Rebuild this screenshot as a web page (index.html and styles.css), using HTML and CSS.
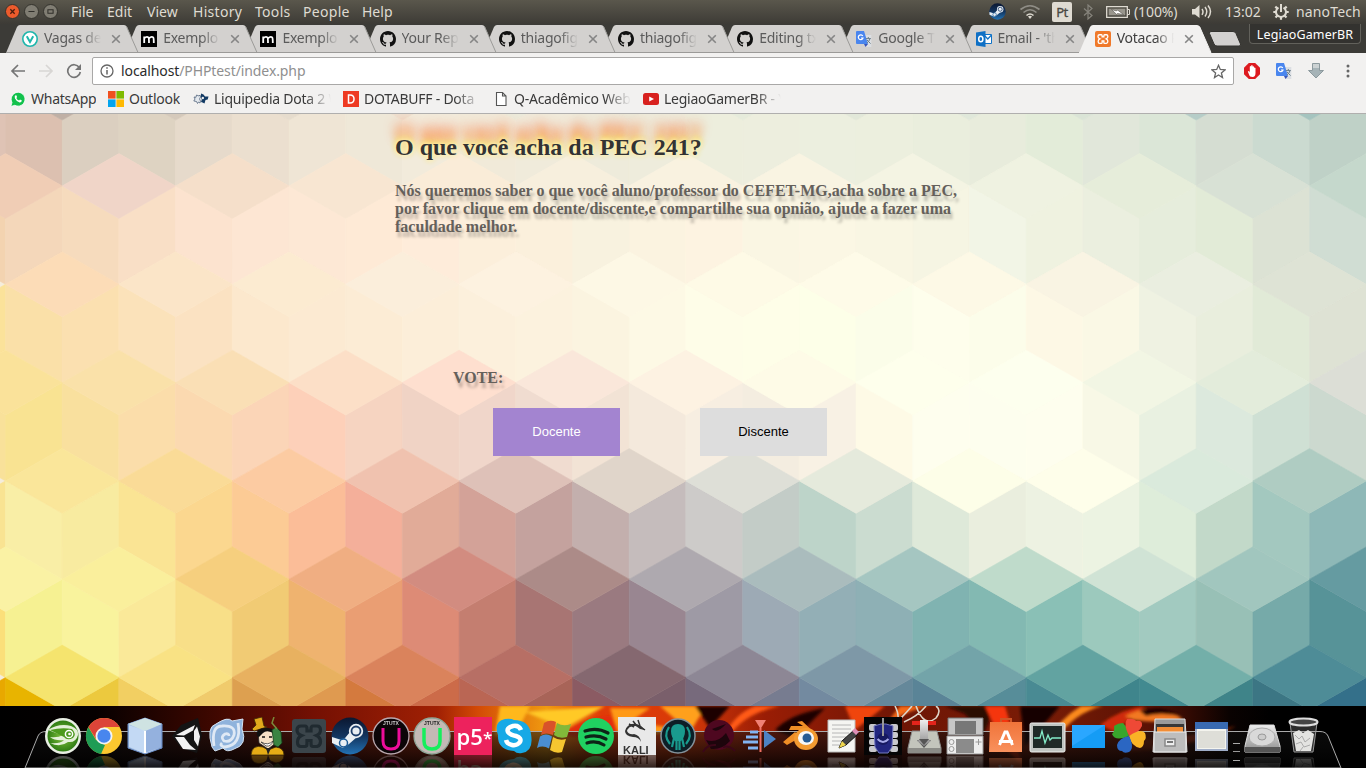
FILE: index.html
```html
<!DOCTYPE html>
<html lang="pt-BR">
<head>
<meta charset="utf-8">
<title>Votacao PEC 241</title>
<link rel="stylesheet" href="styles.css">
</head>
<body>
<svg class="defs" width="0" height="0" aria-hidden="true">
  <defs>
    <symbol id="cross" viewBox="0 0 10 10"><path d="M1.2 1.2 8.8 8.8M8.8 1.2 1.2 8.8" stroke="#858585" stroke-width="1.6" fill="none"/></symbol>
    <symbol id="github" viewBox="0 0 16 16"><path fill="#111" d="M8 0C3.58 0 0 3.58 0 8c0 3.54 2.29 6.53 5.47 7.59.4.07.55-.17.55-.38 0-.19-.01-.82-.01-1.49-2.01.37-2.53-.49-2.69-.94-.09-.23-.48-.94-.82-1.13-.28-.15-.68-.52-.01-.53.63-.01 1.08.58 1.23.82.72 1.21 1.87.87 2.33.66.07-.52.28-.87.51-1.07-1.78-.2-3.64-.89-3.64-3.95 0-.87.31-1.59.82-2.15-.08-.2-.36-1.02.08-2.12 0 0 .67-.21 2.2.82.64-.18 1.32-.27 2-.27s1.36.09 2 .27c1.53-1.04 2.2-.82 2.2-.82.44 1.1.16 1.92.08 2.12.51.56.82 1.27.82 2.15 0 3.07-1.87 3.75-3.65 3.95.29.25.54.73.54 1.48 0 1.07-.01 1.93-.01 2.2 0 .21.15.46.55.38A8.01 8.01 0 0 0 16 8c0-4.42-3.58-8-8-8z"/></symbol>
    <symbol id="medium" viewBox="0 0 16 16"><path fill="#000" d="M0 0h16v16H0z"/><path d="M3.2 12V5.500M3.2 7.400Q5.600 5 7.400 6.400Q8 7 8 12M8 7.400Q10.400 5 12.200 6.400Q12.800 7 12.800 12" fill="none" stroke="#fff" stroke-width="1.800"/></symbol>
    <symbol id="translate" viewBox="0 0 16 16"><path fill="#dcdfe3" d="M7 4h8.3v12H9z"/><path fill="#4a86ee" d="M1 0h7l4 13H1Q0 13 0 12V1Q0 0 1 0z"/><path fill="#3a56b8" d="M8 13h4L9.600 16z"/><path d="M6.800 5A2.400 2.400 0 1 0 7 7H5" stroke="#fff" stroke-width="1.200" fill="none"/><path d="M9.800 7.600h5M12.300 6v1.600M14 7.600Q13.300 10.500 10.800 12M11 9l3.600 3.600" stroke="#6b7f8c" fill="none"/></symbol>
    <symbol id="steam" viewBox="0 0 38 38"><circle cx="19" cy="19" r="18.500" fill="url(#steamg)"/><path d="M1 20 12 23.500 19 15 26 20 18 27 12 31 1 26z" fill="#e9eef3"/><circle cx="25" cy="14" r="7.200" fill="#e9eef3"/><circle cx="25" cy="14" r="4.500" fill="#e9eef3" stroke="#1c3d6b" stroke-width="1.800"/><circle cx="12.500" cy="26" r="4" fill="#e9eef3" stroke="#1b5a96" stroke-width="1.500"/></symbol>
    <symbol id="xampp" viewBox="0 0 38 38"><path d="M11 9h4Q17 9 17 12v2h4v-2q0-3 2-3h4q3.500 0 3.500 4t-4 5.500q4 2 4 6t-3.500 5h-4q-2 0-2-3v-3h-4v3q0 3-2 3h-4q-3.500 0-3.500-4.500t4-6.500Q7 17 7 13t4-4z" fill="none" stroke="currentColor" stroke-width="3.200"/></symbol>
    <linearGradient id="steamg" x2="0" y2="1"><stop offset="0" stop-color="#0b1730"/><stop offset=".5" stop-color="#12345e"/><stop offset="1" stop-color="#2372b4"/></linearGradient>
    <linearGradient id="metal" x2="0" y2="1"><stop offset="0" stop-color="#eee"/><stop offset="1" stop-color="#8c8c8c"/></linearGradient>
    <linearGradient id="cubeg" x2="1"><stop offset="0" stop-color="#8fb0d8"/><stop offset=".5" stop-color="#dceafa"/><stop offset="1" stop-color="#7f9fd0"/></linearGradient>
    <radialGradient id="suse"><stop offset="0" stop-color="#86c440"/><stop offset="1" stop-color="#2f7d13"/></radialGradient>
    <linearGradient id="fold" x2="0" y2="1"><stop offset="0" stop-color="#f0743a"/><stop offset="1" stop-color="#f9915d"/></linearGradient>
  </defs>
</svg>

<header class="menubar">
  <div class="window-buttons">
    <i class="wb close"><svg viewBox="0 0 15 15"><path d="M5 5l5 5M10 5l-5 5" stroke="#4a1d0e" stroke-width="1.500"/></svg></i>
    <i class="wb"><svg viewBox="0 0 15 15"><path d="M4 7.500h7" stroke="#2f2e2a" stroke-width="1.200"/></svg></i>
    <i class="wb"><svg viewBox="0 0 15 15"><path d="M4.500 5.500h6v4h-6z" fill="none" stroke="#2f2e2a" stroke-width="1.200"/></svg></i>
  </div>
  <nav class="menus">
    <span class="m-file">File</span><span class="m-edit">Edit</span><span class="m-view">View</span><span class="m-history">History</span><span class="m-tools">Tools</span><span class="m-people">People</span><span class="m-help">Help</span>
  </nav>
  <div class="tray">
    <svg class="t-steam" width="17" height="17"><use href="#steam"/></svg>
    <svg class="t-wifi" width="22" height="17" viewBox="0 0 22 17"><g fill="none" stroke="#8f8d86" stroke-width="1.600"><path d="M1.500 6.500Q11-1 20.500 6.500M4.500 9.500Q11 4 17.500 9.500" /><path d="M7.500 12.500Q11 9.500 14.500 12.500" stroke="#dfdbd2"/></g><path d="M9 13.500Q11 12 13 13.500L11 16z" fill="#dfdbd2"/></svg>
    <span class="kb">Pt</span>
    <svg class="t-bt" width="10" height="16" viewBox="0 0 10 16"><path d="M1 4.500 9 11.500 5 15V1l4 3.500L1 11.500" fill="none" stroke="#86847c" stroke-width="1.200"/></svg>
    <svg class="t-bat" width="24" height="14" viewBox="0 0 24 14"><path d="M.7 1.700h20.600v10.600H.7z" fill="none" stroke="#dfdbd2" stroke-width="1.300"/><path d="M2.700 3.700h16.600v6.600H2.700z" fill="#99968d"/><path d="M22 4.500h1.500v5H22" fill="none" stroke="#dfdbd2"/><path d="M5.500 4.500l5 1.500 1-1 6 4.500-6-1-1 .8z" fill="#fff" stroke="#55534b" stroke-width=".6"/></svg>
    <span class="pct">(100%)</span>
    <svg class="t-vol" width="20" height="16" viewBox="0 0 20 16"><path d="M0 5h3l4.500-4v13L3 10.500H0z" fill="#dfdbd2"/><path d="M10 5q2 2.800 0 5.800M13 3q3.500 4.500 0 9.500M16 1.500q5 6 0 12.500" fill="none" stroke="#dfdbd2" stroke-width="1.500"/></svg>
    <span class="clock">13:02</span>
    <svg class="t-gear" width="16" height="16" viewBox="0 0 16 16"><path d="M8 0v8" stroke="#dfdbd2" stroke-width="2"/><path d="M5.500 3.600a5 5 0 1 0 5 0" fill="none" stroke="#dfdbd2" stroke-width="2"/><path d="M.3 8H3M13 8h2.700M8 13v2.700M2.300 2.600l2 1.800M13.700 2.600l-2 1.800M2.500 13.500l2-2M13.500 13.500l-2-2" stroke="#dfdbd2" stroke-width="2.200"/></svg>
    <span class="user">nanoTech</span>
  </div>
</header>

<div class="tabstrip">
  <div class="tabs" id="tabs">
    <div class="tab"><svg class="fav" viewBox="0 0 16 16"><circle cx="8" cy="8" r="7.200" fill="#fff" stroke="#1fb6ac" stroke-width="1.600"/><path d="M4.800 5.200 8 11l3.200-5.800" fill="none" stroke="#1fb6ac" stroke-width="2"/></svg><span class="tt">Vagas de</span><svg class="x"><use href="#cross"/></svg></div>
    <div class="tab"><svg class="fav"><use href="#medium"/></svg><span class="tt">Exemplo d</span><svg class="x"><use href="#cross"/></svg></div>
    <div class="tab"><svg class="fav"><use href="#medium"/></svg><span class="tt">Exemplo d</span><svg class="x"><use href="#cross"/></svg></div>
    <div class="tab"><svg class="fav"><use href="#github"/></svg><span class="tt">Your Repo</span><svg class="x"><use href="#cross"/></svg></div>
    <div class="tab"><svg class="fav"><use href="#github"/></svg><span class="tt">thiagofig</span><svg class="x"><use href="#cross"/></svg></div>
    <div class="tab"><svg class="fav"><use href="#github"/></svg><span class="tt">thiagofig</span><svg class="x"><use href="#cross"/></svg></div>
    <div class="tab"><svg class="fav"><use href="#github"/></svg><span class="tt">Editing tx</span><svg class="x"><use href="#cross"/></svg></div>
    <div class="tab"><svg class="fav"><use href="#translate"/></svg><span class="tt">Google Tr</span><svg class="x"><use href="#cross"/></svg></div>
    <div class="tab"><svg class="fav" viewBox="0 0 16 16"><path fill="#fff" stroke="#1173c7" d="M8 3.500h7.500v9H8z"/><path d="M8 4l3.800 4 3.700-4" fill="none" stroke="#1173c7" stroke-width="1.300"/><path fill="#0f70c5" d="M0 1.500 9.500 0v16L0 14.500z"/><ellipse cx="4.800" cy="8" rx="2.100" ry="2.800" fill="none" stroke="#fff" stroke-width="1.500"/></svg><span class="tt">Email - 'th</span><svg class="x"><use href="#cross"/></svg></div>
    <div class="tab active"><svg class="fav" viewBox="0 0 16 16"><rect width="16" height="16" rx="2" fill="#f0792a"/><svg width="16" height="16" color="#fff"><use href="#xampp"/></svg></svg><span class="tt">Votacao P</span><svg class="x"><use href="#cross"/></svg></div>
  </div>
  <svg class="newtab" width="34" height="18" viewBox="0 0 34 18"><path d="M3 1.500h22Q27 1.500 28 3.500L32.500 14Q33 16 31 16H9Q7 16 6 14L1.500 3.500Q1 1.500 3 1.500z" fill="#d3d1cf" stroke="#33322e"/></svg>
  <span class="profile">LegiaoGamerBR</span>
</div>

<div class="toolbar">
  <svg class="nav-ic" viewBox="0 0 16 16"><path d="M15 8H2.500M8 2 2 8l6 6" fill="none" stroke="#757575" stroke-width="1.700"/></svg>
  <svg class="nav-ic" viewBox="0 0 16 16"><path d="M1 8h12.500M8 2l6 6-6 6" fill="none" stroke="#d8d6d4" stroke-width="1.700"/></svg>
  <svg class="nav-ic" viewBox="0 0 16 16"><path d="M13.300 4.500A6.300 6.300 0 1 0 14.300 9" fill="none" stroke="#757575" stroke-width="1.700"/><path d="M15 1v6H9z" fill="#757575"/></svg>
  <div class="omnibox">
    <svg width="14" height="14" viewBox="0 0 14 14"><circle cx="7" cy="7" r="6" fill="none" stroke="#666" stroke-width="1.300"/><path d="M7 6v4.500M7 3.300v1.500" stroke="#666" stroke-width="1.500"/></svg>
    <span class="url"><b>localhost</b>/PHPtest/index.php</span>
    <svg class="star" width="15" height="15" viewBox="0 0 15 15"><path d="M7.500 1.300 9.300 5.500l4.700.4-3.600 3 1.100 4.600-4-2.500-4 2.500 1.100-4.600L1 5.900l4.700-.4z" fill="none" stroke="#666" stroke-width="1.300"/></svg>
  </div>
  <div class="exts">
    <svg width="16" height="16" viewBox="0 0 16 16"><path d="M4.800 0h6.400L16 4.800v6.400L11.200 16H4.800L0 11.200V4.800z" fill="#dd1a1f"/><path d="M3.800 8.500 5 8l.8 1.500V3.500q.8-1 1.400 0V2.600q.8-1 1.400 0v.9q.9-.8 1.400.2v1.100q.9-.8 1.500.2v5Q11.500 14 8.500 14T5 11.500z" fill="#fff"/></svg>
    <svg width="16" height="16"><use href="#translate"/></svg>
    <svg width="18" height="18" viewBox="0 0 18 18"><path d="M5.500 1.500h7v7h4L9 16 1.500 8.500h4z" fill="#a6b3b7" stroke="#8d9a9e"/><path d="M6 2h6v4H6z" fill="#ccd2d3"/></svg>
    <svg width="4" height="16" viewBox="0 0 4 16"><g fill="#666"><circle cx="2" cy="3" r="1.500"/><circle cx="2" cy="8" r="1.500"/><circle cx="2" cy="13" r="1.500"/></g></svg>
  </div>
</div>

<div class="bookmarks">
  <a class="bm b1"><svg viewBox="0 0 16 16"><path d="M.8 15.500 2 11.500A6.900 6.900 0 1 1 4.800 14.300z" fill="#12c14c" stroke="#fff" stroke-width=".8"/><path d="M5.500 4.300q-1.400 1-.5 3.100 1.500 3.200 4.700 4 2 .2 2.200-1.800l-1.900-1-.9 1Q7.300 9 6.300 7l.8-.9-.8-1.900z" fill="#fff"/></svg><span>WhatsApp</span></a>
  <a class="bm b2"><svg viewBox="0 0 16 16"><path fill="#f0501f" d="M0 0h7.600v7.600H0z"/><path fill="#7fba00" d="M8.400 0H16v7.600H8.400z"/><path fill="#03a4ee" d="M0 8.400h7.600V16H0z"/><path fill="#feb902" d="M8.400 8.400H16V16H8.400z"/></svg><span>Outlook</span></a>
  <a class="bm b3"><svg viewBox="0 0 16 16"><path d="M3.500 4l2.500 1 1-1 .5 2-1 2 1 2-.5 2-1.500-1-1 1.500-1-2L.8 10l1.200-2-1-2 2 .3z" fill="#e3e8ed" stroke="#54667d" stroke-width=".8"/><path d="M8 2.500l2.500 1 1.500 2 3.500 0-.8 3-2.200.5-1 3.500-2-1-1.500-.5.8-2.500-1-2z" fill="#123a63"/><circle cx="9.800" cy="7" r="1.200" fill="#f2f1f0"/></svg><span>Liquipedia Dota 2 W</span></a>
  <a class="bm b4"><svg viewBox="0 0 16 16"><path fill="#ee3a22" d="M0 0h16v16H0z"/><path d="M5.500 4v8h1.500q4 0 4-4t-4-4z" fill="none" stroke="#fff" stroke-width="1.500"/></svg><span>DOTABUFF - Dota</span></a>
  <a class="bm b5"><svg viewBox="0 0 16 16"><path d="M3.500 1.500h6L13 5v9.500H3.500zM9.500 1.500V5H13" fill="#fff" stroke="#555" stroke-width="1.100"/></svg><span>Q-Acadêmico Web</span></a>
  <a class="bm b6"><svg viewBox="0 0 16 16"><rect y="2" width="16" height="12" rx="2.500" fill="#d8211e"/><path d="M6.200 5.500 11 8l-4.800 2.500z" fill="#fff"/></svg><span>LegiaoGamerBR - Y</span></a>
</div>

<main class="page">
  <svg class="mosaic" id="mosaic" viewBox="0 114 1366 592" width="1366" height="592"></svg>
  <section class="content">
    <h2>O que você acha da PEC 241?</h2>
    <p class="lead">Nós queremos saber o que você aluno/professor do CEFET-MG,acha sobre a PEC, por favor clique em docente/discente,e compartilhe sua opnião, ajude a fazer uma faculdade melhor.</p>
    <div class="vote">
      <p class="label">VOTE:</p>
      <div class="choices"><button class="primary">Docente</button><button>Discente</button></div>
    </div>
  </section>
</main>

<footer class="dock">
  <svg class="flames" width="1366" height="62" viewBox="0 706 1366 62">
    <defs>
      <linearGradient id="fire"><stop offset="0" stop-color="#000"/><stop offset=".07" stop-color="#060000"/><stop offset=".15" stop-color="#3a0700"/><stop offset=".23" stop-color="#741003"/><stop offset=".32" stop-color="#a02004"/><stop offset=".35" stop-color="#d34a06"/><stop offset=".4" stop-color="#f09a10"/><stop offset=".44" stop-color="#e03c08"/><stop offset=".5" stop-color="#d83a08"/><stop offset=".56" stop-color="#9a1d05"/><stop offset=".66" stop-color="#6e1605"/><stop offset=".76" stop-color="#7a1c06"/><stop offset=".84" stop-color="#5a1204"/><stop offset=".9" stop-color="#0a0201"/><stop offset=".93" stop-color="#000"/></linearGradient>
      <linearGradient id="shelf" x2="0" y2="1"><stop offset="0" stop-color="#111" stop-opacity=".55"/><stop offset="1" stop-color="#000" stop-opacity=".9"/></linearGradient>
      <filter id="soft"><feGaussianBlur stdDeviation="1.500"/></filter>
    </defs>
    <path fill="url(#fire)" d="M0 706h1366v62H0z"/>
    <g filter="url(#soft)">
      <path d="M500 706h30l-15 30h-20z" fill="#ffb81c"/><path d="M525 712l80-6-40 22z" fill="#ffc928"/><path d="M560 735q30-25 70-18l-20 24z" fill="#e22f0a"/><path d="M610 708l40 0-20 14 60 8-70 8z" fill="#ff9a12"/><path d="M660 706l30 26 16-26z" fill="#ffa01c"/>
      <path d="M695 706h35l-20 22z" fill="#1c0401"/><path d="M730 735q15-22 50-29h-25q-20 8-30 28z" fill="#ff5a12"/><path d="M775 730q15-16 50-22l-30 30z" fill="#1a0401"/><path d="M845 706h40l-30 24z" fill="#f04510"/><path d="M870 745q20-32 60-39h-30z" fill="#f66a18"/><path d="M945 706l50 0-12 30-18-22z" fill="#2a0702"/><path d="M985 706h20l18 60-20-20z" fill="#f5360a"/><path d="M1020 706h40l-35 40z" fill="#120301"/><path d="M1055 740q20-28 48-34h-22q-20 12-34 34z" fill="#fb8a1e"/><path d="M1100 725q20-16 45-19l-30 26z" fill="#d02c08"/><path d="M1125 716q30-16 58 3-18 5-50 1z" fill="#f27820"/><path d="M1140 711q22-8 40 5-20-4-34 0z" fill="#240502"/><path d="M1130 740q50 0 106-14-36 20-106 26z" fill="#8a2208"/>
    </g>
    <path d="M895 706q5 10 2 16M912 706q-12 14-20 20M916 706q8 22 20 12 6-8 0-12M926 706q-8 10-22 16" fill="none" stroke="#ded5c8" stroke-width="1.600"/>
    <path d="M25 768 38 736Q40 731.500 46 731.500H1320Q1326 731.500 1328 736L1341 768z" fill="url(#shelf)" stroke="#aaa" stroke-width="1"/>
  </svg>
  <div class="icons">
    <svg viewBox="0 0 38 38"><circle cx="19" cy="19" r="18" fill="#e9efe4"/><circle cx="19" cy="19" r="15.500" fill="url(#suse)"/><path d="M4 13Q15 6 27 9q8 3 7 9-2 8-10 7-8 6-18 1 10 1 14-3-9 1-14-3 8 1 13-2-8-2-15-5z" fill="#e4f0d8"/><path d="M6 13q12-3 22-1 5 5 1 9-6 3-9-1" fill="#4c991e"/><circle cx="25" cy="17" r="3.600" fill="#4c991e" stroke="#fff" stroke-width="1.500"/><circle cx="25.500" cy="17" r="1.300" fill="#fff"/></svg>
    <svg viewBox="0 0 38 38"><circle cx="19" cy="19" r="18" fill="#fbc72f"/><path d="M3.400 10 11 23l9 5-4 9A18 18 0 0 1 3.400 10z" fill="#1f9c55"/><path d="M3.400 10A18 18 0 0 1 34.600 10H19l-8 12z" fill="#dc4438"/><circle cx="19" cy="19" r="8.500" fill="#f4f4f4"/><circle cx="19" cy="19" r="6.700" fill="#4886ee"/></svg>
    <svg viewBox="0 0 38 38"><path d="M19 1 36 7v24L19 37 2 31V7z" fill="url(#cubeg)" stroke="#6d8fc9"/><path d="M19 1 36 7 19 14 2 7z" fill="#cfe3e2"/><path d="M3 8l16 6v22L3 30z" fill="#c3d9f4"/><path d="M35 8 19 14v22l16-6z" fill="#94b1de"/><path d="M19 14v22" stroke="#fff" stroke-width="2"/></svg>
    <svg viewBox="0 0 38 38"><path d="M31 1 35 18 30 36 14 31 5 19l9-11z" fill="#141414"/><path d="M28 8 9 18l8 .5 9-5zM30 9.500 27 14v9l4 6.500 2-10zM8 20l8 12 13 1-6-5-6-8z" fill="#f2f2f2"/></svg>
    <svg viewBox="0 0 38 38"><path d="M4 30Q-2 10 8 7 20-1 24 4l11-2-1 10q6 16-8 20-7 4-11-1l-8 3z" fill="#8fb3dc" stroke="#d5e4f4"/><path d="M6 29Q3 9 14 9q14-1 12 9-3 8-10 6-4-4 1-7 4-1 4 2M30 6q4 22-13 24-6-1-3-4" fill="none" stroke="#dfe9f5" stroke-width="2.800"/></svg>
    <svg viewBox="0 0 38 38"><path d="M7 8 5 2l8-2 2 9 3 1-13 4-2-2z" fill="#e2a81c" stroke="#3c2b05" stroke-width=".8"/><path d="M9 15q9-6 17 1l1 10-8 6-9-6z" fill="#f7e2c8" stroke="#222" stroke-width=".8"/><path d="M8 19q-2-8 9-8 9-1 9 6-8-5-12-1l-4 4z" fill="#111"/><path d="M13 20h3M20 20h3" stroke="#111" stroke-width="1.500"/><path d="M12 25q7 4 12-1-2 6-7 5z" fill="#fff" stroke="#222" stroke-width=".7"/><path d="M2 38q1-11 12-8l5 3 8-3q8 1 8 8z" fill="#e5ac16" stroke="#3c2b05" stroke-width=".8"/><path d="M17 31l2 7 3-7z" fill="#222"/><path d="M23 13l4-3 5 5 1 11-4 4-4-2z" fill="#3a8442" stroke="#153c1a" stroke-width=".8"/><path d="M25 0l-2 6 5 6" stroke="#7a8a3b" stroke-width="1.500" fill="none"/></svg>
    <svg viewBox="0 0 38 38" color="#202a30"><rect x="2" y="2" width="34" height="34" rx="3" fill="#3b454b"/><use href="#xampp"/></svg>
    <svg><use href="#steam"/></svg>
    <svg viewBox="0 0 38 38"><circle cx="19" cy="19" r="18" fill="#0c0508" stroke="#b9a7ae" stroke-width="1.300"/><path d="M11 11v13q0 8 8 8t8-8V11" fill="none" stroke="#ee0d9a" stroke-width="3"/><text x="19" y="8" class="tiny" fill="#ccc">JTUTX</text></svg>
    <svg viewBox="0 0 38 38"><circle cx="19" cy="19" r="18" fill="#c4b9b5" stroke="#8fa597" stroke-width="1.300"/><path d="M11 11v13q0 8 8 8t8-8V11" fill="none" stroke="#16ee5c" stroke-width="3.500"/><text x="19" y="8" class="tiny" fill="#222">JTUTX</text></svg>
    <svg viewBox="0 0 38 38"><path fill="#ed225d" d="M0 0h38v38H0z"/><text x="2.500" y="28" class="p5">p5</text><text x="29" y="27" class="p5s">*</text></svg>
    <svg viewBox="0 0 38 38"><path d="M10 2q6-1 9 1 15 0 17 14 3 17-9 19-5 1-8-2Q2 33 3 18-2 5 10 2z" fill="#17a9e6"/><path d="M26 13q-2-5-8-4-7 2-5 6 2 3 8 4 6 2 4 6-3 4-8 3-5-1-6-5" fill="none" stroke="#fff" stroke-width="4.500"/></svg>
    <svg viewBox="0 0 38 38"><path d="M8 6q6-4 12-1l-3 13q-7-3-12 0z" fill="#d9522a"/><path d="M21 6q6 4 14 1l-4 13q-8 2-13-2z" fill="#82b83a"/><path d="M4 19.500q6-4 12 0l-3 12Q7 28 1 31z" fill="#4a8ed2"/><path d="M17 20q6 4 13 2l-4 13q-6 2-12-2z" fill="#f6c630"/></svg>
    <svg viewBox="0 0 38 38"><circle cx="19" cy="19" r="18" fill="#20d161"/><path d="M8 14q12-4 23 2M9 20q11-3 20 2M10 26q9-3 17 2" fill="none" stroke="#0d2417" stroke-width="3.200" stroke-linecap="round"/></svg>
    <svg viewBox="0 0 38 38"><path fill="#e9e9e9" d="M0 0h38v38H0z"/><path d="M9 12q5-7 12-3l6 4M11 7l5 3M15 4l4 5M20 3l2 6" fill="none" stroke="#333" stroke-width="1.500"/><path d="M18 9q-9 0-9 5 2 4 7 3 6 1 7 8-2-5-8-5-8-1-8-6 2-8 11-7l5 2 4 4-5-1z" fill="#333"/><text x="5" y="36.500" class="kali">KALI</text></svg>
    <svg viewBox="0 0 38 38"><circle cx="19" cy="19" r="17" fill="#0d1e26" stroke="#83919a" stroke-width="1.500"/><path d="M10 10q-6 9 1 17M28 10q6 9-1 17M15 21l-2 9M17.500 22v11M20.500 22v11M23 21l2 9" fill="none" stroke="#199a8e" stroke-width="2.200"/><path d="M19 7q7 0 7 7 0 6-4 10h-6q-4-4-4-10 0-7 7-7z" fill="#199a8e"/></svg>
    <svg viewBox="0 0 38 38"><circle cx="19" cy="18" r="15" fill="#4e0820"/><path d="M6 23q11 4 20-7l4 8q-8 9-19 8M12 12q5 5 14-5" fill="#1d050c"/><path d="M3 35q4-8 13-7M35 34q-6-6-12-4" stroke="#3a0718" stroke-width="2" fill="none"/></svg>
    <svg viewBox="0 0 38 38"><path d="M19.500 11v24" stroke="#ef6f62" stroke-width="2"/><path d="M14 3h11l-5.500 9z" fill="#f08074"/><path d="M9 15h8M5 20h12M2 25h15M7 31h10" stroke="#82b4f2" stroke-width="3"/><path d="M23 13l12 9-12 9z" fill="#4d83c4"/></svg>
    <svg viewBox="0 0 38 38"><path d="M20 4 35 18l-6 4-12-9H7l2-4 12 0-6-4zM1 25l12-10 6 5-14 8z" fill="#ef8e26"/><ellipse cx="24" cy="22" rx="12" ry="11" fill="#f39a31"/><ellipse cx="24" cy="21" rx="8" ry="7" fill="#f7f7f7"/><circle cx="25" cy="21" r="4.500" fill="#265b94"/></svg>
    <svg viewBox="0 0 38 38"><path fill="#f5f5f2" stroke="#bbb" d="M5 3h27v32H5z"/><path d="M9 8h19M9 12h19M9 16h17M9 20h14M9 24h10M9 28h9" stroke="#b6b6b6"/><path d="M16 31l3-7L31 13l4 4-12 11z" fill="#444" stroke="#111"/><path d="M16 31l3-7 4 4z" fill="#efd64d"/><path d="M29 14l3-3 4 4-3 3z" fill="#e08fb6"/></svg>
    <svg viewBox="0 0 38 38"><path fill="#050505" d="M0 0h38v38H0z"/><g fill="#c8c8cc"><rect x="5" y="7" width="8" height="7" rx="2"/><rect x="5" y="15" width="8" height="6" rx="2"/><rect x="5" y="22" width="8" height="6" rx="2"/><rect x="5" y="29" width="8" height="6" rx="2"/><rect x="26" y="7" width="8" height="7" rx="2"/><rect x="26" y="15" width="8" height="6" rx="2"/><rect x="26" y="22" width="8" height="6" rx="2"/><rect x="26" y="29" width="8" height="6" rx="2"/></g><path d="M10 9l7-2h5l7 2-1 21-4 6h-9l-4-6z" fill="#22267f" stroke="#777cc0"/><circle cx="19" cy="22" r="6" fill="#171a60"/><path d="M13.500 22q5.500 6 11 0" fill="none" stroke="#a5a9e8" stroke-width="2"/><path d="M19 1v18" stroke="#999" stroke-width="2"/></svg>
    <svg viewBox="0 0 38 38"><path fill="#c3c5bc" stroke="#888" d="M7 14h25l4 17v5H3v-5z"/><path d="M3 31h33v5H3z" fill="#8b8c87"/><path d="M7 4h24v4H7z" fill="#e2241b"/><path d="M12 23h14l-7 8z" fill="#555"/><path d="M15 3h8v17q0 3 3 4l-7 5-7-5q3-1 3-4z" fill="url(#metal)"/><path d="M14 22h10l-5 6z" fill="#555"/></svg>
    <svg viewBox="0 0 38 38"><path fill="#c6c6c6" stroke="#777" d="M2 1h35v17H2z"/><path fill="#777" d="M9 4h21v13H9z"/><path fill="#eee" stroke="#999" d="M1 19h36v18H1z"/><path fill="#8b8b8b" d="M10 22h18v14H10z"/><g fill="none" stroke="#999"><circle cx="5.500" cy="25" r="2.500"/><circle cx="5.500" cy="32" r="2.500"/><path d="M32.500 22v6M29.500 25h6"/></g></svg>
    <svg viewBox="0 0 38 38"><path d="M14 7V2h10v5" fill="none" stroke="#cf5526" stroke-width="2"/><path fill="url(#fold)" d="M3 5h32v30H2z"/><path d="M12.500 28 18 15h2l5.500 13M12 24.500h14" fill="none" stroke="#fff" stroke-width="3"/></svg>
    <svg viewBox="0 0 38 38"><rect x="2" y="6" width="35" height="29" rx="1.500" fill="#c1c5c2" stroke="#eee"/><path fill="#202a28" d="M5 9h29v22H5z"/><path d="M6 21h6l2-7 3 12 3-8 2 5 2-2h9" fill="none" stroke="#84edc9" stroke-width="1.300"/></svg>
    <svg viewBox="0 0 38 38"><path fill="#159cf5" d="M3 8h33v23H3z"/><path fill="#2aa7ff" d="M3 8h33L3 29z"/></svg>
    <svg viewBox="0 0 38 38"><path d="M19 19Q5 25 2 17q3-3 2-8 4-3 9-3 5 5 6 13z" fill="#38a52c"/><path d="M19 19Q13 7 17 2q7-1 9 2 7-1 6 5-3 7-13 10z" fill="#ee4936"/><path d="M19 19q12-8 16-3 2 5-1 8 0 6-4 7-9-2-11-12z" fill="#f9b326"/><path d="M19 19q6 12 0 16-5 2-7-1-5 0-5-6 2-7 12-9z" fill="#2b66c2"/></svg>
    <svg viewBox="0 0 38 38"><path fill="#9b9b9b" stroke="#ddd" d="M4 2h30l2 33H2z"/><path fill="#383838" d="M5 7h28v8H5z"/><path fill="#f28d35" d="M6 10h26v5H6z"/><path fill="#bdbdbd" stroke="#eee" d="M3 15h32v20H3z"/><path d="M14 22h10v7H14z" fill="#eee" stroke="#888" stroke-width="1.500"/><path d="M16 25h6" stroke="#777" stroke-width="2"/></svg>
    <svg viewBox="0 0 38 38"><path fill="#f4f4ee" stroke="#9fadc8" stroke-width="2" d="M4 6h31v27H4z"/><path fill="#396ab2" d="M3 5h33v7H3z"/><path fill="#deded8" d="M6 14h27v17H6z"/></svg>
    <span class="sep"></span>
    <svg viewBox="0 0 38 38"><path fill="url(#metal)" stroke="#ddd" d="M7 8h24l6 21v6H2v-6z"/><ellipse cx="19" cy="20" rx="13" ry="9" fill="#d9d9d9" stroke="#aaa"/><ellipse cx="19" cy="20" rx="4" ry="3" fill="#ccc" stroke="#999"/><path d="M2 30h35v5H2z" fill="#555"/></svg>
    <svg viewBox="0 0 38 38"><path d="M6 6h27l-4 29H10z" fill="#aaa" fill-opacity=".25" stroke="#999"/><path d="M9 16l6-3 4 3 5-3 6 4-3 17H12z" fill="#e3e3e1"/><path d="M11 18l4 4 3-3 3 6 5-4M12 27l5-2 3 5 6-2M16 34l3-4" stroke="#aaa" fill="none"/><ellipse cx="19.500" cy="5" rx="14" ry="3.500" fill="#444" stroke="#ddd" stroke-width="2"/></svg>
  </div>
</footer>
<script src="script.js"></script>
</body>
</html>
```
FILE: styles.css
```css
* { box-sizing: border-box; }
body {
  margin: 0;
  width: 1366px;
  height: 768px;
  overflow: hidden;
  display: flex;
  flex-direction: column;
  background: #000;
  font-family: "Noto Sans", "Open Sans", sans-serif;
  font-size: 14px;
}
.defs { position: absolute; }

/* system menu bar */
.menubar {
  flex: none;
  height: 24px;
  display: flex;
  align-items: center;
  padding-bottom: 1px;
  color: #dfdbd2;
  background: linear-gradient(#5a574c, #3d3b36);
  white-space: nowrap;
}
.window-buttons { display: flex; gap: 4px; padding-left: 5px; width: 71px; }
.wb { width: 15px; height: 15px; border-radius: 50%; background: #807d73; border: 1px solid #34332d; }
.wb.close { background: #ec5b2c; }
.wb svg { display: block; width: 13px; height: 13px; }
.menus { display: flex; flex: 1; }
.m-file { width: 36px; }
.m-edit { width: 40px; }
.m-view { width: 46px; }
.m-history { width: 62px; letter-spacing: .3px; }
.m-tools { width: 48px; letter-spacing: .3px; }
.m-people { width: 59px; letter-spacing: .3px; }
.tray { display: flex; align-items: center; width: 377px; }
.t-wifi { margin-left: 13px; }
.kb { margin-left: 11px; width: 20px; height: 20px; border-radius: 2px; background: #dfdbd2; color: #4a4842; font-size: 13px; line-height: 20px; text-align: center; letter-spacing: -.5px; -webkit-text-stroke: .3px #4a4842; }
.t-bt { margin-left: 11px; }
.t-bat { margin-left: 13px; }
.pct { margin-left: 4px; width: 48px; letter-spacing: -.1px; }
.t-vol { margin-left: 10px; }
.clock { margin-left: 13px; width: 48px; }
.user { margin-left: 7px; letter-spacing: .15px; }

/* tab strip */
.tabstrip { flex: none; height: 29px; display: flex; background: #3c3b37; position: relative; }
.tabs { display: flex; padding-left: 6px; width: 1208px; }
.tab { position: relative; isolation: isolate; flex: none; width: 119.2px; height: 29px; display: flex; align-items: center; padding-left: 16px; color: #5b5b5b; }
.tab .shape { position: absolute; left: 0; top: 0; width: 133px; height: 29px; z-index: -1; }
.tab .fav { flex: none; width: 16px; height: 16px; }
.tt { width: 57px; margin: -2px 0 0 6px; height: 20px; line-height: 20px; overflow: hidden; white-space: nowrap; letter-spacing: -.25px; -webkit-mask-image: linear-gradient(90deg, #000 68%, transparent); }
.tab .x { width: 10px; height: 10px; margin-left: 10px; }
.tab.active { color: #3f3f3f; }
.newtab { margin: 6px 0 0; }
.profile { margin-left: 7px; width: 112px; height: 20px; border: 1px solid #62615b; border-top: 0; border-radius: 0 0 4px 4px; background: #33322f; color: #fff; font-size: 12.5px; line-height: 22px; text-align: center; letter-spacing: .1px; }

/* toolbar */
.toolbar { flex: none; height: 34px; background: #f2f1f0; display: flex; align-items: center; padding-left: 10px; gap: 12px; padding-top: 2px; }
.nav-ic { width: 16px; height: 16px; flex: none; }
.omnibox { margin-left: -2px; width: 1142px; height: 28px; background: #fff; border: 1px solid #a9a8a7; border-radius: 2px; display: flex; align-items: center; padding: 0 7px; color: #8f8f8f; }
.url { flex: 1; margin: -2px 0 0 7px; letter-spacing: -.1px; }
.url b { font-weight: normal; color: #2b2b2b; }
.exts { display: flex; align-items: center; gap: 15px; margin-left: -2px; }
.exts svg:nth-child(2) { margin-left: 1px; }
.exts svg:last-child { margin-left: 6px; }

/* bookmarks */
.bookmarks { flex: none; height: 27px; background: #f2f1f0; border-bottom: 1px solid #b0afae; display: flex; padding-left: 10px; color: #3a3a3a; }
.bm { display: flex; align-items: center; height: 24px; gap: 5px; white-space: nowrap; letter-spacing: -.25px; }
.bm svg { width: 16px; height: 16px; flex: none; }
.bm span { overflow: hidden; line-height: 20px; margin-top: -1px; }
.b1 { width: 98px; }
.b2 { width: 85px; }
.b3, .b4, .b5, .b6 { width: 150px; }
.b3 span, .b4 span, .b5 span, .b6 span { width: 117px; -webkit-mask-image: linear-gradient(90deg, #000 78%, transparent); }

/* page */
.page { flex: none; height: 592px; display: grid; overflow: hidden; background: #f5eddc; font-family: "Liberation Serif", serif; }
.mosaic, .content { grid-area: 1 / 1; }
.mosaic { filter: blur(.7px); }
.content { position: relative; width: 576px; margin-left: 395px; }
h2 {
  margin: 20px 0 0;
  font-size: 24px;
  line-height: 27px;
  color: #333;
  text-shadow: 0 0 4px #fff, 0 0 5px #ffdf3d, 0 -3px 6px rgba(255, 221, 51, .8), 0 -12px 9px rgba(255, 128, 0, .5), 0 -18px 12px rgba(255, 80, 20, .55);
}
.lead, .label { margin: 20px 0 0; font-size: 16px; line-height: 18px; font-weight: bold; color: #64605b; text-shadow: 2px 5px 3px rgba(0, 0, 0, .26); }
.lead { margin-top: 21px; letter-spacing: .012px; }
.vote { margin: 133px 0 0 58px; }
.label { margin: 0; }
.choices { display: flex; gap: 80px; margin: 21px 0 0 40px; }
button { width: 127px; height: 48px; border: 0; padding: 0 0 1px; background: #ddd; color: #000; font: 13px "Liberation Sans", sans-serif; }
.primary { background: #a384d0; color: #fff; }

/* dock */
.dock { flex: none; height: 62px; display: grid; overflow: hidden; background: #000; }
.flames, .icons { grid-area: 1 / 1; }
.icons { position: relative; display: flex; gap: 3px; padding: 11px 0 0 44px; }
.icons > svg { flex: none; width: 38px; height: 38px; -webkit-box-reflect: below 0 linear-gradient(transparent 50%, rgba(0, 0, 0, .35)); }
.sep { width: 7px; height: 18px; margin: 26px 0 0; border-top: 1px solid #aaa; border-bottom: 1px solid #aaa; background: linear-gradient(#999, #999) 0 7px / 100% 1px no-repeat; }
.tiny { font: bold 5px "Liberation Sans", sans-serif; text-anchor: middle; }
.p5 { font: 600 22px "Open Sans", sans-serif; fill: #fff; }
.p5s { font: 600 17px "Open Sans", sans-serif; fill: #fff; }
.kali { font: bold 11px "Liberation Sans", sans-serif; fill: #333; }
```
FILE: script.js
```js
const NS = "http://www.w3.org/2000/svg";

/* Isometric cube mosaic: per row, the top rhombi and the side faces from left to right. */
const rows = [
  { odd: 1,
    tops: "c0b0a5 d5c9bb e6dccd eee0d0 ecebdb ecebdb e6ebdb e2e8d9 e0e8da dae4d6 b6cdc8 a5c4bf",
    faces: "dfc3b5 dcc0b0 dbcfc0 ded3c2 e6dacb ebdfcf efe5d5 efe8d8 f2ebdb f1ead9 f0ebdb eeebdb eeecdc edeedd edeede ecefdf ecefde eaeedd e8ecdc e3ecd9 e1e7da dbe6d7 d5ddd2 cbdad0 bfd1c7" },
  { odd: 0,
    tops: "f0cdb5 f0d5c8 f5dfca f8e6d2 faecd8 f7efdd f9f2e0 f9f4e2 f4f4e3 eff2e1 e6edda d8e1d5 c5d8cc",
    faces: "f3d3b0 f4d7ba f6dbbd f9dfc6 fce3cf fde6d3 fde8d5 feead6 feecda fcefdb fbf0dc f8f2df fbf3e0 fdf3e1 faf6e3 fbf7e4 f9f6e3 f6f5e3 f2f5e6 eff2e0 ebefdf e6eddc e2ebd7 dce2d4 d0ddd3" },
  { odd: 1,
    tops: "fcdcb7 fbe5c8 fcebd1 fbeedb fdf2e0 fdf8e5 fefae6 fefbe8 fdf9e6 f9f4e3 eaeee0 dee3d5",
    faces: "fbe29a fae0a8 fbe0b0 fbe2ba fbe2c2 fce8cd fcead2 fcecd5 fceed9 fcf0dc fcf2de fbf4e0 fdf9e5 fefde8 fefee8 fdffe8 fbfde9 fefeec fcfdea fdf8e5 faf8e5 eff2e2 e9eedd e1ead7 dee2d4" },
  { odd: 0,
    tops: "fae29a fae1a9 fadfb5 fcdfc7 fedfcf fae7da fdf2e2 fefbe7 feffec fdffee f2f6e4 e3ecdb dcded6",
    faces: "f9e19a f9e392 f9e09e fbddaa fbd9b0 fbd5b7 fdd0b9 f6d4c1 f0d3c5 f0d6ca f0dcd0 f2e3d5 f4e9dc f7eee1 f4ede0 f8f1e4 fefae6 fefeee fdfeee fefeee f8f8e6 e9f1e1 dce9dd cfe0d4 ccd9cf" },
  { odd: 1,
    tops: "fae69a fadb97 fccba2 f0c2af dec1b8 e0d5ca dedfd7 e5eadc fdfee8 fefeea daeadc afccc2",
    faces: "f9e392 f9eea6 f8eba0 fae494 fbd78f fccb95 fbbd98 f4af9a e1ab98 d3a298 c4a29e c3afad c5bcbc cdcbc9 c3ccc7 bdd4c9 cbdcd0 dee9d9 eaeede edf2e2 ecf3e2 deedda c2d9c9 a3c8bf 8eb8b7" },
  { odd: 0,
    tops: "faf2a4 faef9c f6cf7e f0ae82 d28c80 ac8b88 aea9af aabcbd a5c6c1 bfdbcb d0e3d5 a1c6be 659ba1",
    faces: "fbdf7a f6f192 f9f39d fae999 f8df88 f1cb74 efb36f ea9e73 dd8b76 c47e70 a87573 9a7a80 998691 9e9aa5 9daab5 93afb6 8eb0b5 80b3b1 83b9b2 8ac0b6 9cc9bd a2cac0 98c0b6 76aaa9 579398" },
  { odd: 1,
    tops: "f5e46e f9e284 e8b160 da835c b76f65 856870 8d8795 7e98a7 73a4a9 62a3a1 73afa9 4e8c97",
    faces: "e8a800 e8b400 ecc93e f2cf62 f0cb6c dda050 df9a50 d47a3e cc6b49 ba6654 a86458 8b5b63 7a5f6b 776a7c 777c90 738aa0 65889a 5a8497 578d99 498a93 3f858c 428a90 3f8489 3c7684 34708a" }
];

const STEP = 56.7, HALF = 32.4, PERIOD = 98.3;
const mosaic = document.getElementById("mosaic");
const px = i => 5.5 + STEP * i;

function polygon(points, color) {
  const p = document.createElementNS(NS, "polygon");
  p.setAttribute("points", points.map(q => q.join(",")).join(" "));
  p.setAttribute("fill", "#" + color);
  p.setAttribute("stroke", "#" + color);
  p.setAttribute("stroke-width", ".6");
  mosaic.appendChild(p);
}

rows.forEach((row, r) => {
  const y = 55.3 + PERIOD * r;
  row.faces.split(" ").forEach((color, n) => {
    const j = n - 1;
    const leftIsApex = Math.abs(j % 2) === row.odd;
    const a = y + (leftIsApex ? 2 * HALF : HALF);
    const b = y + (leftIsApex ? HALF : 2 * HALF);
    const drop = PERIOD - HALF;
    polygon([[px(j), a], [px(j + 1), b], [px(j + 1), b + drop], [px(j), a + drop]], color);
  });
  row.tops.split(" ").forEach((color, n) => {
    const i = 2 * n + row.odd;
    polygon([[px(i), y], [px(i + 1), y + HALF], [px(i), y + 2 * HALF], [px(i - 1), y + HALF]], color);
  });
});

/* Slanted tab outlines; each tab overlaps the one to its right. */
document.querySelectorAll(".tab").forEach((tab, n) => {
  const active = tab.classList.contains("active");
  tab.style.zIndex = active ? 30 : 20 - n;
  const fill = active ? "#f2f1f0" : "#d3d1cf";
  const line = active ? fill : "#9b9a98";
  tab.insertAdjacentHTML("afterbegin",
    `<svg class="shape" viewBox="0 0 133 29"><path d="M0 29 11 3Q12.200 1 14 1H118Q119.800 1 121 3L132 29z" fill="${fill}"/>` +
    `<path d="M120.500 2.500 132 28.500H0" fill="none" stroke="${line}"/></svg>`);
});
```
